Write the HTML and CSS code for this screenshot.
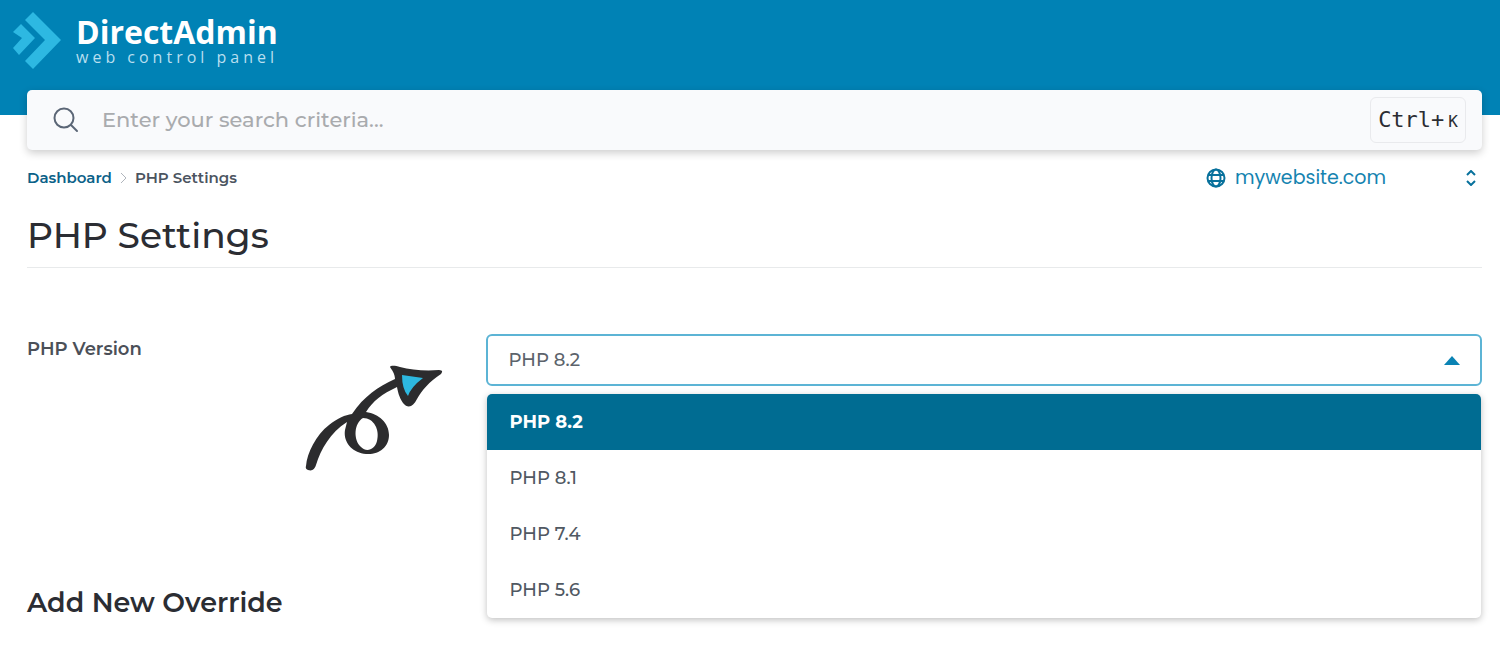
FILE: index.html
```html
<!DOCTYPE html>
<html lang="en">
<head>
<meta charset="utf-8">
<meta name="viewport" content="width=device-width, initial-scale=1">
<title>PHP Settings - DirectAdmin</title>
<link rel="stylesheet" href="styles.css">
</head>
<body>
<header class="topbar">
  <a class="brand" href="#">
    <svg class="brand-mark" viewBox="0 0 49 57" aria-hidden="true">
      <path d="M21 0 49 28 21 57 13 49 33 28 13 8Z"/>
      <path d="M9 12 23 26 7 43 1 36 10 26 1 20Z"/>
    </svg>
    <span class="brand-text">
      <span class="brand-name">DirectAdmin</span>
      <span class="brand-tag">web control panel</span>
    </span>
  </a>
</header>
<main class="page">
  <form class="search" role="search">
    <svg class="search-icon" viewBox="0 0 26 26" aria-hidden="true"><circle cx="11" cy="11" r="9.500"/><path d="M18 18 24 24"/></svg>
    <input class="search-input" type="search" aria-label="Search" placeholder="Enter your search criteria...">
    <kbd class="shortcut">Ctrl+<span class="shortcut-key">K</span></kbd>
  </form>
  <div class="subbar">
    <nav class="crumbs" aria-label="Breadcrumb">
      <a class="crumb-link" href="#">Dashboard</a>
      <svg class="crumb-sep" viewBox="0 0 7 12" aria-hidden="true"><path d="M1 1 6 6 1 11"/></svg>
      <span>PHP Settings</span>
    </nav>
    <label class="site">
      <svg class="site-globe" viewBox="0 0 20 20" aria-hidden="true"><circle cx="10" cy="10" r="8.500"/><ellipse cx="10" cy="10" rx="4.500" ry="8.500"/><path d="M2 7H18M2 13H18"/></svg>
      <select class="site-select" aria-label="Domain"><option>mywebsite.com</option></select>
      <svg class="site-caret" viewBox="0 0 10 16" aria-hidden="true"><path d="M1 5 5 1 9 5M1 11 5 15 9 11"/></svg>
    </label>
  </div>
  <h1 class="title">PHP Settings</h1>
  <section class="field">
    <div class="field-side">
      <label class="field-label" for="php-version">PHP Version</label>
      <svg class="arrow" viewBox="0 0 138 108" aria-hidden="true">
        <path class="arrow-ink" d="M1 101C2 88 11 70 24 60C33 53 40 50 47 49C59 31 73 22 90 14C90 9 87 5 85 2C86 0 91 1 95 2C106 5 120 6 134 5Q139 5 136 9C124 17 117 25 112 34C108 42 103 44 98 38C94 32 93 27 92 22C77 29 68 36 61 47C74 49 84 58 84 70C84 82 74 90 61 89C47 88 38 77 40 65L42 57C25 68 16 84 11 100Q9 107 3 105Q0 104 1 101Z"/>
        <path class="arrow-hole" d="M58 53C49 58 48 75 56 82C62 88 70 84 72 76C75 65 69 53 58 53Z"/>
        <path class="arrow-fill" d="M97 10 118 13Q106 22 103 31Q97 24 97 10Z"/>
      </svg>
    </div>
    <div class="picker">
      <select class="picker-select" id="php-version">
        <option>PHP 8.2</option><option>PHP 8.1</option><option>PHP 7.4</option><option>PHP 5.6</option>
      </select>
      <svg class="picker-caret" viewBox="0 0 16 9" aria-hidden="true"><path d="M8 0 16 9H0Z"/></svg>
      <ul class="menu" role="listbox" aria-label="PHP Version">
        <li class="option option-active" role="option" aria-selected="true">PHP 8.2</li>
        <li class="option" role="option" aria-selected="false">PHP 8.1</li>
        <li class="option" role="option" aria-selected="false">PHP 7.4</li>
        <li class="option" role="option" aria-selected="false">PHP 5.6</li>
      </ul>
    </div>
  </section>
  <h2 class="subtitle">Add New Override</h2>
</main>
</body>
</html>
```
FILE: styles.css
```css
* { box-sizing: border-box; }
body {
  margin: 0;
  background: #fff;
  color: #2b2d33;
  font-family: Montserrat, Inter, sans-serif;
  font-size: 18px;
}
.topbar { background: #0082b5; padding: 12px 12px 46px; }
.brand { display: inline-flex; gap: 15px; color: #fff; text-decoration: none; vertical-align: top; }
.brand-mark { width: 49px; height: 57px; fill: #2db8e2; }
.brand-text { display: flex; flex-direction: column; }
.brand-name { font: 700 32px/40px "Open Sans", sans-serif; }
.brand-tag { font: 400 16px/10px "Open Sans", sans-serif; letter-spacing: 4px; color: #b9dfef; }
.page { padding: 0 18px 24px 27px; }
.search {
  display: flex;
  align-items: center;
  margin-top: -25px;
  padding: 7px 16px 7px 26px;
  background: #f9fafc;
  border-radius: 5px;
  box-shadow: 0 3px 8px rgba(0, 0, 0, .2);
}
.search-icon { width: 26px; height: 26px; fill: none; stroke: #5b6676; stroke-width: 2; stroke-linecap: round; }
.search-input {
  flex: 1;
  min-width: 0;
  margin-left: 23px;
  padding: 0;
  border: 0;
  outline: 0;
  background: transparent;
  font: 500 21px/28px Montserrat, Inter, sans-serif;
}
.search-input::placeholder { color: #a9abae; }
.shortcut {
  padding: 1px 7px 0;
  border: 1px solid #e9eaed;
  border-radius: 6px;
  font: 400 22px/42px "DejaVu Sans Mono", monospace;
}
.shortcut { line-height: 41px; }
.shortcut-key { margin-left: 4px; font-size: 16px; }
.subbar { display: flex; justify-content: space-between; align-items: center; padding-top: 14px; }
.crumbs { display: flex; align-items: center; gap: 8px; font-size: 15px; line-height: 28px; font-weight: 600; color: #4b545f; }
.crumb-link { color: #0b6188; text-decoration: none; }
.crumb-sep { width: 7px; height: 12px; fill: none; stroke: #b0b5bc; stroke-width: 1; }
.site { display: flex; align-items: center; width: 276px; padding-right: 6px; }
.site-globe { width: 20px; height: 20px; fill: none; stroke: #08719c; stroke-width: 2; }
.site-select {
  flex: 1;
  min-width: 0;
  margin-left: 9px;
  padding: 0;
  border: 0;
  background: transparent;
  appearance: none;
  color: #1583b0;
  font: 400 19px/28px Poppins, Inter, sans-serif;
}
.site-caret { width: 10px; height: 16px; fill: none; stroke: #08719c; stroke-width: 2; }
.title { margin: 19px 0 0; padding-bottom: 8px; border-bottom: 1px solid #e8eaeb; font-size: 36px; line-height: 48px; font-weight: 500; }
.field { display: grid; grid-template-columns: 6fr 13fr; margin-top: 66px; }
.field-side { display: flex; justify-content: space-between; padding-right: 43px; }
.field-label { line-height: 30px; font-weight: 600; color: #4b5058; }
.arrow { width: 138px; height: 108px; margin-top: 31px; }
.arrow-ink { fill: #2c2c2e; }
.arrow-hole { fill: #fff; }
.arrow-fill { fill: #2db8e0; }
.picker { position: relative; align-self: start; }
.picker-select {
  display: block;
  width: 100%;
  height: 52px;
  padding: 0 20px;
  border: 2px solid #5cb4d5;
  border-radius: 6px;
  background: #fff;
  appearance: none;
  color: #5c636b;
  font: 500 18px/28px Montserrat, Inter, sans-serif;
}
.picker-caret { position: absolute; top: 22px; right: 22px; width: 16px; height: 9px; fill: #0a83b4; }
.menu {
  position: absolute;
  top: 60px;
  left: 1px;
  right: 1px;
  margin: 0;
  padding: 0;
  overflow: hidden;
  list-style: none;
  background: #fff;
  border-radius: 5px;
  box-shadow: 0 2px 7px rgba(0, 0, 0, .25);
}
.option { padding: 14px 22px; line-height: 28px; font-weight: 500; color: #505862; }
.option-active { background: #006c92; color: #fff; font-weight: 700; }
.subtitle { margin: 112px 0 0; font-size: 27px; line-height: 36px; font-weight: 600; }
```
